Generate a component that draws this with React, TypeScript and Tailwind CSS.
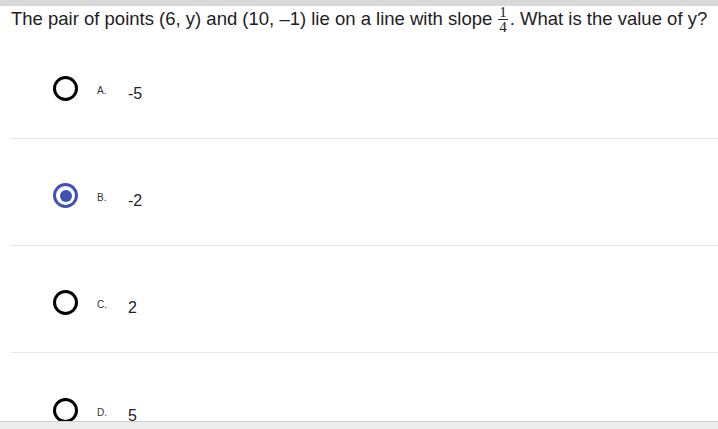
const options = [
  { letter: "A.", value: "-5", selected: false },
  { letter: "B.", value: "-2", selected: true },
  { letter: "C.", value: "2", selected: false },
  { letter: "D.", value: "5", selected: false },
];

function Radio({ selected }: { selected: boolean }) {
  if (selected) {
    return (
      <span className="flex h-[25px] w-[25px] items-center justify-center rounded-full border-[3px] border-[#3f51b5]">
        <span className="h-[12px] w-[12px] rounded-full bg-[#3f51b5]" />
      </span>
    );
  }
  return <span className="block h-[25px] w-[25px] rounded-full border-[3px] border-black" />;
}

export default function App() {
  return (
    <div className="relative h-[429px] w-[718px] overflow-hidden bg-white font-['Liberation_Sans',Arial,sans-serif] text-[#222]">
      <div className="h-[6px] bg-[#d8d8d8]" />
      <div className="flex h-[26px] items-center whitespace-nowrap pl-[11px] text-[18.5px] leading-none">
        <span>The pair of points (6, y) and (10, –1) lie on a line with slope</span>
        <span className="ml-[6px] mr-[2px] inline-flex flex-col items-center font-['Liberation_Serif',serif] text-[15px] leading-[12px]">
          <span className="border-b border-[#333] px-[1px] pb-[1px]">1</span>
          <span className="pt-[1px]">4</span>
        </span>
        <span>. What is the value of y?</span>
      </div>
      <div className="ml-[11px]">
        {options.map((o) => (
          <div
            key={o.letter}
            className="flex h-[107px] items-center border-b border-[#e6e6e6] pt-[7px] last:border-b-0"
          >
            <div className="ml-[42px]">
              <Radio selected={o.selected} />
            </div>
            <span className="ml-[19px] w-[31px] pt-[4px] text-[10px] text-[#333]">{o.letter}</span>
            <span className="pt-[11px] text-[16px] text-[#222]">{o.value}</span>
          </div>
        ))}
      </div>
      <div className="absolute bottom-0 left-0 h-[8px] w-full border-t border-[#d0d0d0] bg-[#ececec]" />
    </div>
  );
}
